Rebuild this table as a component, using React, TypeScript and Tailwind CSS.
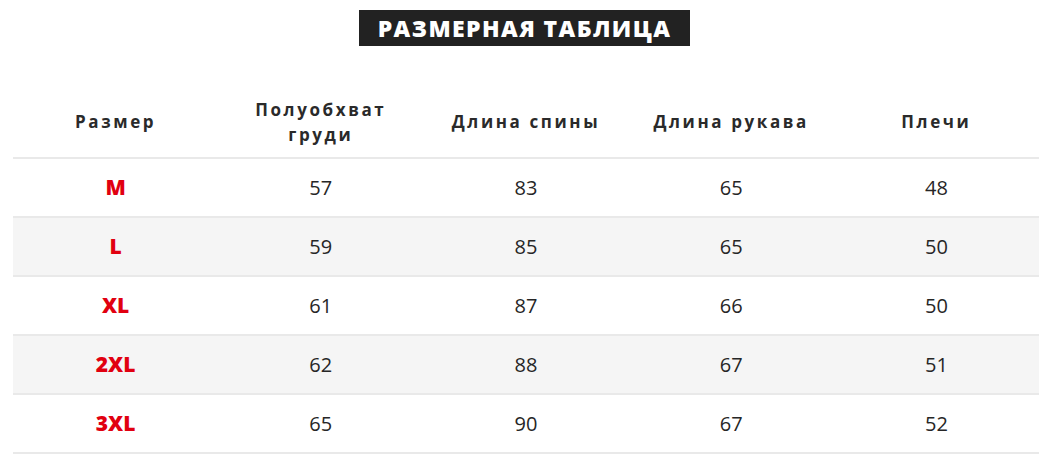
const HEADERS = ['Размер', 'Полуобхват груди', 'Длина спины', 'Длина рукава', 'Плечи']

const ROWS: [string, number, number, number, number][] = [
  ['M', 57, 83, 65, 48],
  ['L', 59, 85, 65, 50],
  ['XL', 61, 87, 66, 50],
  ['2XL', 62, 88, 67, 51],
  ['3XL', 65, 90, 67, 52],
]

export default function App() {
  return (
    <div className="w-[1053px] h-[475px] bg-white font-['Open_Sans',sans-serif] text-[#333] overflow-hidden">
      {/* Title */}
      <div className="flex justify-center pt-[10px] pr-[4px]">
        <h2 className="bg-[#222] text-white font-extrabold text-[23px] leading-[36px] px-[19px] tracking-[1.4px]">
          РАЗМЕРНАЯ ТАБЛИЦА
        </h2>
      </div>

      {/* Table */}
      <div className="mx-[13px] mt-[40px] w-[1026px]">
        <div className="grid grid-cols-5 h-[73px] items-center border-b-2 border-[#e9e9e9]">
          {HEADERS.map((h) => (
            <div
              key={h}
              className="text-center font-bold text-[17px] leading-[25px] tracking-[2.6px] px-[18px] text-[#2a2a2a]"
            >
              {h}
            </div>
          ))}
        </div>
        {ROWS.map((row, i) => (
          <div
            key={row[0]}
            className={`grid grid-cols-5 h-[59px] items-center border-b-2 border-[#e9e9e9] ${i % 2 === 1 ? 'bg-[#f5f5f5]' : 'bg-white'}`}
          >
            {row.map((cell, j) => (
              <div
                key={j}
                className={
                  j === 0
                    ? 'text-center font-extrabold text-[21px] text-[#e10010]'
                    : 'text-center text-[20px] font-normal text-[#262626]'
                }
              >
                {cell}
              </div>
            ))}
          </div>
        ))}
      </div>
    </div>
  )
}
